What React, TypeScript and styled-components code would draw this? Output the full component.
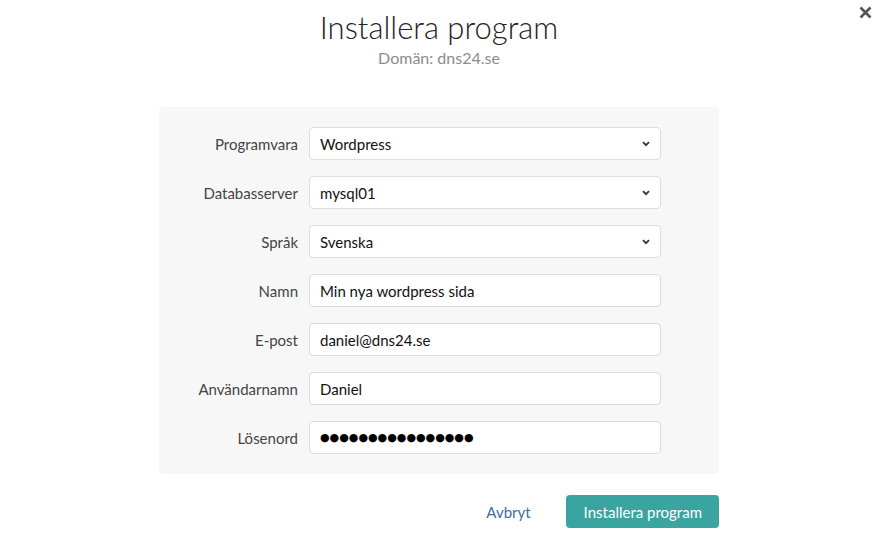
import React from "react";
import styled, { createGlobalStyle } from "styled-components";

const Global = createGlobalStyle`
  html, body { margin: 0; padding: 0; background: #fff; }
  body { font-family: "Source Sans Pro", Lato, "Liberation Sans", sans-serif; }
  * { box-sizing: border-box; }
`;

const Page = styled.div`
  position: relative;
  width: 880px;
  height: 548px;
  display: flex;
  flex-direction: column;
  align-items: center;
  padding: 7px 2px 0 0;
`;

const Close = styled.button`
  position: absolute;
  top: 2px;
  right: 5px;
  width: 20px;
  height: 20px;
  border: 0;
  background: transparent;
  padding: 0;
  display: flex;
  align-items: center;
  justify-content: center;
  cursor: pointer;
`;

const Title = styled.h1`
  margin: 0;
  font-weight: 300;
  font-size: 31px;
  line-height: 40px;
  color: #222;
`;

const Subtitle = styled.div`
  margin-top: 1px;
  font-size: 16px;
  line-height: 20px;
  color: #8c8c8c;
`;

const Panel = styled.div`
  margin-top: 39px;
  width: 560px;
  background: #f7f7f7;
  border-radius: 4px;
  padding: 20px 58px 20px 0;
  display: flex;
  flex-direction: column;
  gap: 16px;
`;

const Row = styled.div`
  display: grid;
  grid-template-columns: 139px 352px;
  column-gap: 11px;
  align-items: center;
`;

const Label = styled.label`
  text-align: right;
  font-size: 15px;
  color: #444;
`;

const Field = styled.div`
  position: relative;
  height: 33px;
  background: #fff;
  border: 1px solid #dcdcdc;
  border-radius: 4px;
  display: flex;
  align-items: center;
  padding: 0 10px;
  font-size: 15px;
  color: #111;
`;

const Input = styled.input`
  border: 0;
  outline: none;
  background: transparent;
  width: 100%;
  padding: 0;
  font: inherit;
  color: inherit;
`;

const Dots = styled.span`
  font-family: "DejaVu Sans", sans-serif;
  font-size: 11px;
  letter-spacing: 0px;
  color: #000;
`;

const Chevron = styled.svg`
  position: absolute;
  right: 10px;
  top: 50%;
  margin-top: -3px;
`;

const Actions = styled.div`
  width: 560px;
  margin-top: 21px;
  display: flex;
  justify-content: flex-end;
  align-items: center;
  gap: 35px;
`;

const LinkButton = styled.button`
  border: 0;
  background: transparent;
  font: inherit;
  font-size: 15px;
  color: #3a6ea5;
  padding: 0;
  cursor: pointer;
`;

const Primary = styled.button`
  border: 0;
  border-radius: 4px;
  background: #3aa5a0;
  color: #fff;
  font: inherit;
  font-size: 15px;
  height: 33px;
  padding: 0 17px 0 18px;
  cursor: pointer;
`;

const SelectField = ({ value }: { value: string }) => (
  <Field>
    {value}
    <Chevron width="8" height="6" viewBox="0 0 8 6">
      <path d="M1 1.2 L4 4.2 L7 1.2" fill="none" stroke="#333" strokeWidth="1.8" />
    </Chevron>
  </Field>
);

export default function App() {
  return (
    <>
      <Global />
      <Page>
        <Close aria-label="Stäng">
          <svg width="13" height="13" viewBox="0 0 13 13">
            <path d="M1.5 1.5 L11.5 11.5 M11.5 1.5 L1.5 11.5" stroke="#555" strokeWidth="2.6" strokeLinecap="butt" />
          </svg>
        </Close>
        <Title>Installera program</Title>
        <Subtitle>Domän: dns24.se</Subtitle>
        <Panel>
          <Row>
            <Label>Programvara</Label>
            <SelectField value="Wordpress" />
          </Row>
          <Row>
            <Label>Databasserver</Label>
            <SelectField value="mysql01" />
          </Row>
          <Row>
            <Label>Språk</Label>
            <SelectField value="Svenska" />
          </Row>
          <Row>
            <Label>Namn</Label>
            <Field><Input defaultValue="Min nya wordpress sida" /></Field>
          </Row>
          <Row>
            <Label>E-post</Label>
            <Field><Input defaultValue="daniel@dns24.se" /></Field>
          </Row>
          <Row>
            <Label>Användarnamn</Label>
            <Field><Input defaultValue="Daniel" /></Field>
          </Row>
          <Row>
            <Label>Lösenord</Label>
            <Field><Dots>{"●".repeat(16)}</Dots></Field>
          </Row>
        </Panel>
        <Actions>
          <LinkButton>Avbryt</LinkButton>
          <Primary>Installera program</Primary>
        </Actions>
      </Page>
    </>
  );
}
